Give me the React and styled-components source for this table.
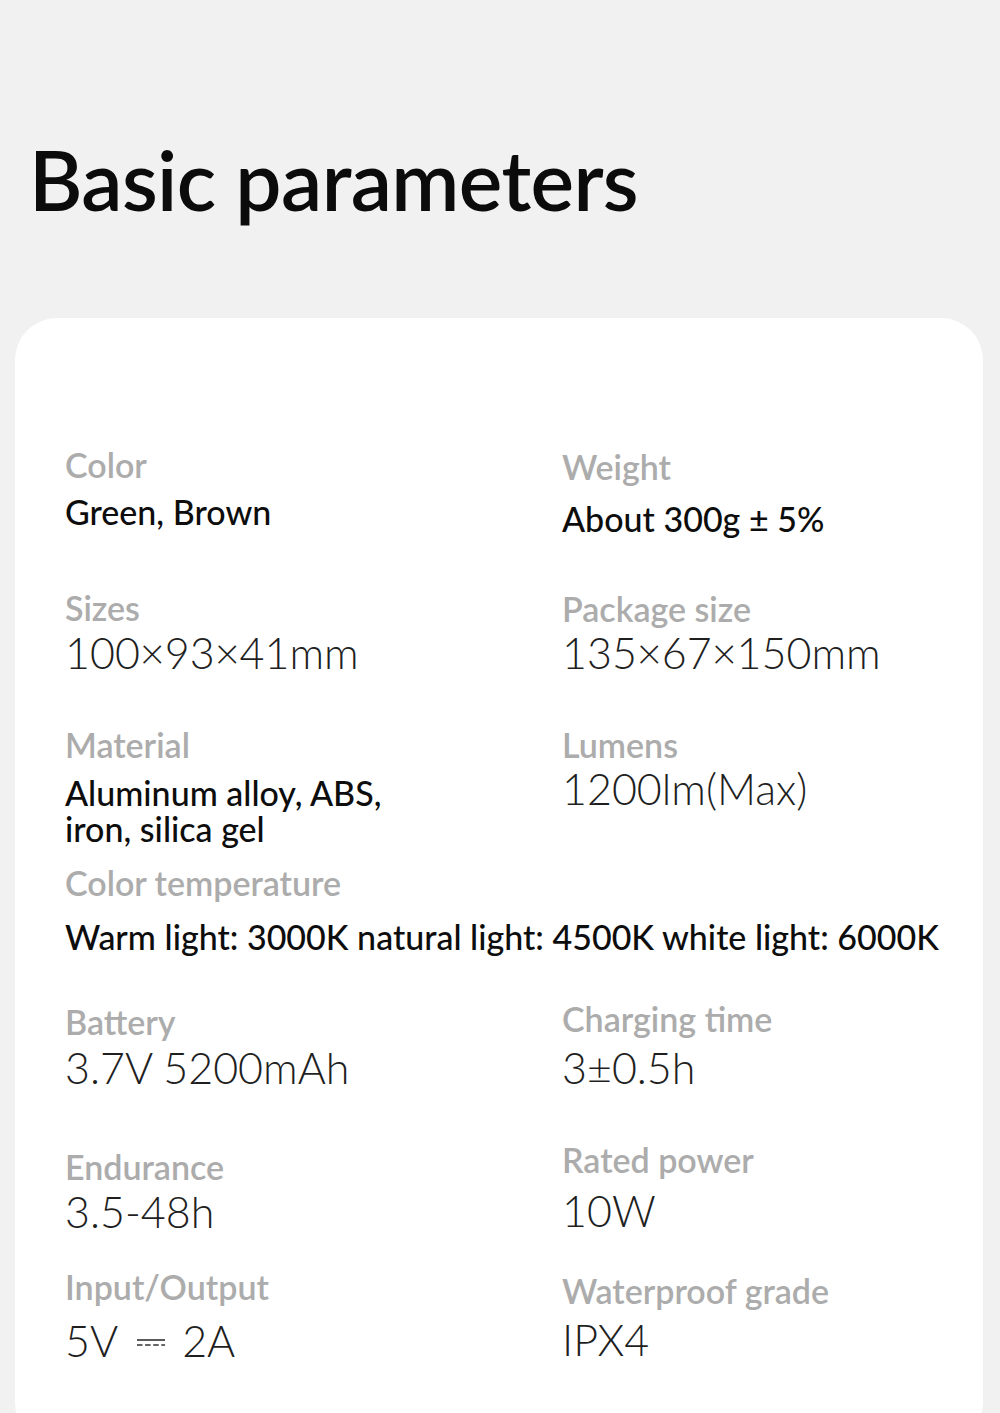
import React from 'react';
import styled, { createGlobalStyle } from 'styled-components';

const GlobalStyle = createGlobalStyle`
	html, body {
		margin: 0;
		padding: 0;
		background: #f1f1f1;
	}
	body {
		font-family: Lato, "Noto Sans", sans-serif;
		overflow: hidden;
	}
`;

const Page = styled.div`
	width: 1000px;
	min-height: 1413px;
	padding-top: 138px;
	box-sizing: border-box;
	background: #f1f1f1;
`;

const Title = styled.h1`
	margin: 0 0 0 29px;
	font-size: 82px;
	line-height: 82px;
	font-weight: 600;
	color: #0b0b0b;
	letter-spacing: -0.6px;
`;

const Card = styled.div`
	margin: 98px 17px 0 15px;
	padding: 127px 0 80px 50px;
	background: #ffffff;
	border-radius: 42px;
`;

const Row = styled.div`
	display: grid;
	grid-template-columns: ${(p) => (p.$full ? '1fr' : '497px 1fr')};
	align-items: start;
	margin-top: ${(p) => p.$mt}px;
`;

const Cell = styled.div`
	display: flex;
	flex-direction: column;
	margin-top: ${(p) => p.$dy || 0}px;
`;

const Label = styled.div`
	font-size: 34px;
	line-height: 40px;
	font-weight: 600;
	color: #acacac;
`;

const Value = styled.div`
	margin-top: ${(p) => p.$gap}px;
	color: ${(p) => (p.$light ? '#1f1f1f' : '#0d0d0d')};
	font-size: ${(p) => (p.$light ? 43 : 34)}px;
	line-height: ${(p) => (p.$light ? 48 : 36)}px;
	font-weight: ${(p) => (p.$light ? 300 : 500)};
	white-space: pre-line;
`;

const DcMark = styled.svg`
	width: 30px;
	height: 12px;
	margin: 0 16px 0 18px;
	vertical-align: 8px;
`;

const DcSymbol = () => (
	<DcMark viewBox="0 0 30 12">
		<line x1="1" y1="3" x2="29" y2="3" stroke="#333" strokeWidth="1.6" />
		<line x1="1" y1="8" x2="29" y2="8" stroke="#333" strokeWidth="1.6" strokeDasharray="5.5 2.6" />
	</DcMark>
);

const rows = [
	{
		mt: 0,
		cells: [
			{ label: 'Color', value: 'Green, Brown', gap: 9 },
			{ label: 'Weight', value: 'About 300g ± 5%', dy: 2, gap: 14 },
		],
	},
	{
		mt: 51,
		cells: [
			{ label: 'Sizes', value: '100×93×41mm', light: true, gap: 1 },
			{ label: 'Package size', value: '135×67×150mm', light: true, dy: 1, gap: 0 },
		],
	},
	{
		mt: 48,
		cells: [
			{ label: 'Material', value: 'Aluminum alloy, ABS,\niron, silica gel', gap: 10 },
			{ label: 'Lumens', value: '1200lm(Max)', light: true, gap: 0 },
		],
	},
	{
		mt: 16,
		full: true,
		cells: [
			{
				label: 'Color temperature',
				value: 'Warm light: 3000K natural light: 4500K white light: 6000K',
				gap: 16,
			},
		],
	},
	{
		mt: 44,
		cells: [
			{ label: 'Battery', value: '3.7V 5200mAh', light: true, dy: 3, gap: 2 },
			{ label: 'Charging time', value: '3±0.5h', light: true, gap: 5 },
		],
	},
	{
		mt: 48,
		cells: [
			{ label: 'Endurance', value: '3.5-48h', light: true, dy: 7, gap: 1 },
			{ label: 'Rated power', value: '10W', light: true, gap: 7 },
		],
	},
	{
		mt: 31,
		cells: [
			{
				label: 'Input/Output',
				value: (
					<>
						5V<DcSymbol />2A
					</>
				),
				light: true,
				gap: 10,
			},
			{ label: 'Waterproof grade', value: 'IPX4', light: true, dy: 4, gap: 5 },
		],
	},
];

const App = () => {
	return (
		<>
			<GlobalStyle />
			<Page>
				<Title>Basic parameters</Title>
				<Card>
					{rows.map((row, i) => (
						<Row key={i} $mt={row.mt} $full={row.full}>
							{row.cells.map((c) => (
								<Cell key={c.label} $dy={c.dy}>
									<Label>{c.label}</Label>
									<Value $light={c.light} $gap={c.gap}>
										{c.value}
									</Value>
								</Cell>
							))}
						</Row>
					))}
				</Card>
			</Page>
		</>
	);
};

export default App;
